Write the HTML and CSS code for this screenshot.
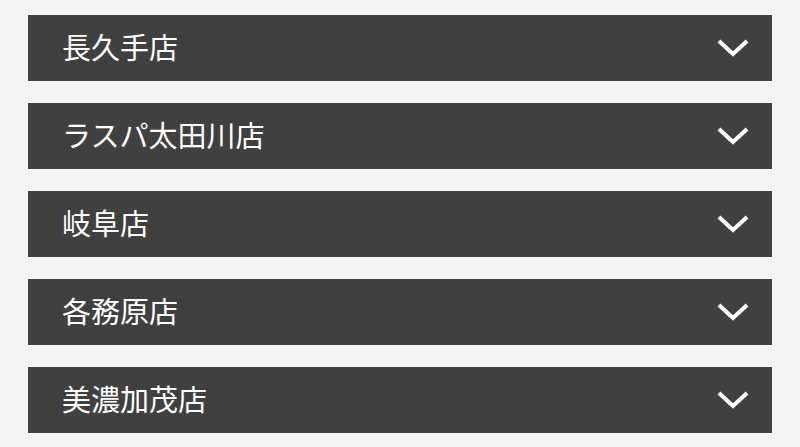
FILE: index.html
```html
<!DOCTYPE html>
<html lang="ja">
<head>
<meta charset="utf-8">
<link rel="stylesheet" href="styles.css">
</head>
<body>
<div class="list">
  <div class="item"><span class="name">長久手店</span><svg class="chev" viewBox="0 0 32 18"><polyline points="2,2 16,15 30,2"/></svg></div>
  <div class="item"><span class="name">ラスパ太田川店</span><svg class="chev" viewBox="0 0 32 18"><polyline points="2,2 16,15 30,2"/></svg></div>
  <div class="item"><span class="name">岐阜店</span><svg class="chev" viewBox="0 0 32 18"><polyline points="2,2 16,15 30,2"/></svg></div>
  <div class="item"><span class="name">各務原店</span><svg class="chev" viewBox="0 0 32 18"><polyline points="2,2 16,15 30,2"/></svg></div>
  <div class="item"><span class="name">美濃加茂店</span><svg class="chev" viewBox="0 0 32 18"><polyline points="2,2 16,15 30,2"/></svg></div>
</div>
</body>
</html>
```
FILE: styles.css
```css
html, body { margin: 0; padding: 0; }
body {
  background: #f4f4f4;
  font-family: "Noto Sans CJK JP", "Noto Sans", sans-serif;
}
.list {
  padding: 15px 28px 0 28px;
  display: flex;
  flex-direction: column;
  gap: 22px;
}
.item {
  height: 66px;
  background: #404040;
  display: flex;
  align-items: center;
  justify-content: space-between;
  padding: 0 23px 0 34px;
}
.name {
  color: #fff;
  font-size: 29px;
  line-height: 1;
  padding-bottom: 4px;
}
.chev {
  width: 32px;
  height: 18px;
  fill: none;
  stroke: #fff;
  stroke-width: 4;
}
```
